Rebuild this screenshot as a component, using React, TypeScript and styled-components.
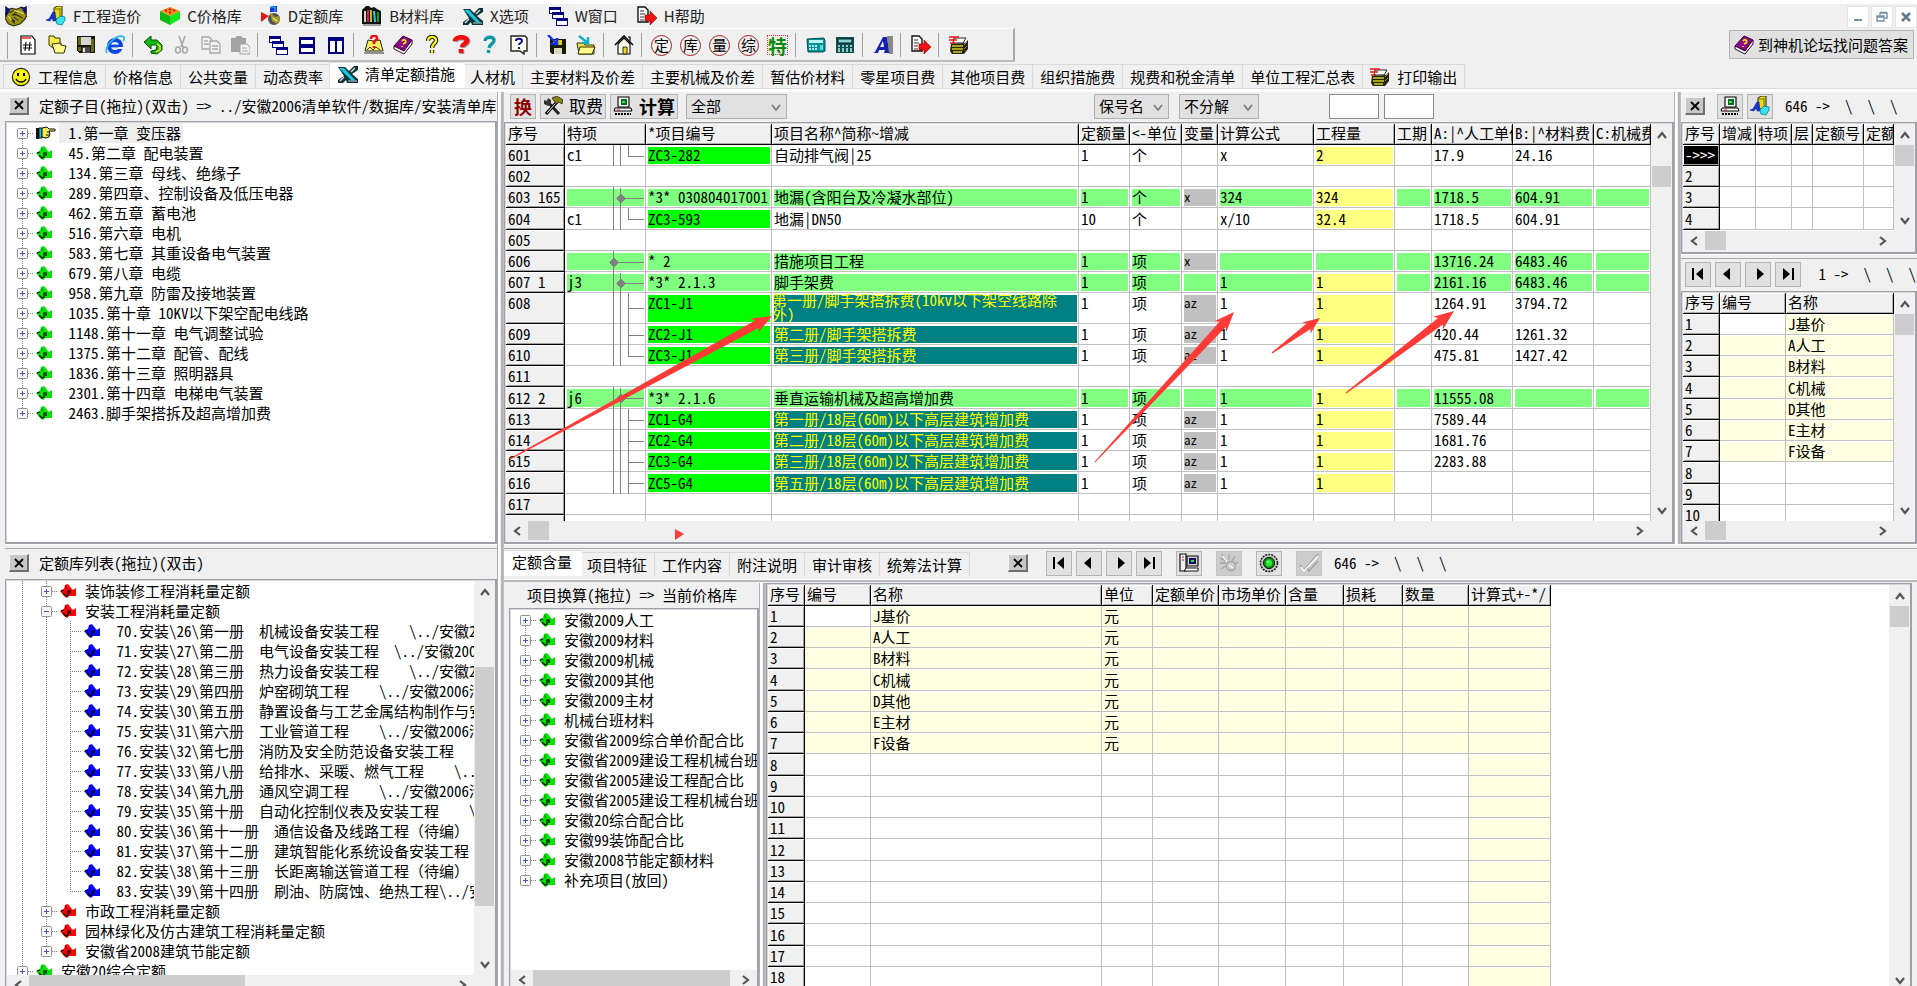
import React from 'react';
import styled, { createGlobalStyle, css } from 'styled-components';

const MONO = '"Noto Sans Mono CJK SC", "Noto Sans CJK SC", sans-serif';
const UI = '"Noto Sans CJK SC", sans-serif';

const face = '#f0f0f0';
const line = '#c0c0c0';
const edge = '#a0a0a8';

const Global = createGlobalStyle`
  *, *::before, *::after { box-sizing: border-box; }
  html, body { margin: 0; height: 100%; background: ${face}; }
  body { overflow: hidden; }
  body, button, select, input { font-family: ${MONO}; font-size: 15px; line-height: 20px; color: #000; }
  button, select, input { margin: 0; padding: 0; border: 0; border-radius: 0; background: none; }
  ul { margin: 0; padding: 0; list-style: none; }
  svg { display: block; flex: none; }
`;

/* ---------- icons ---------- */

const Pic = ({ children, size = 20 }: { children: React.ReactNode; size?: number }) => (
  <svg width={size} height={size} viewBox="0 0 20 20" aria-hidden="true">
    {children}
  </svg>
);

const I: Record<string, React.ReactNode> = {
  hands: (
    <>
      <path d="M1 5l5-2 4 1 5-2 5 2v5l-2 4-4 4-6 2-5-2-3-5z" fill="#9a9218" stroke="#2c2a04" />
      <path d="M0 1l5 3-4 7zM20 1l-5 2 4 6z" fill="#10107a" />
      <path d="M4 7l4-2 3 1-4 3 4 0 5 3M5 12l4 3M8 11l4 3M6 14l3 3" fill="none" stroke="#2c2a04" />
      <path d="M8 5l4 1 5 2M3 10l3 4" stroke="#ece460" fill="none" />
    </>
  ),
  abc: (
    <>
      <path d="M8 2l3-2h5v11l-2 2H8z" fill="#e8d820" stroke="#222" strokeWidth="1" />
      <path d="M14 2v11M8 3h6" stroke="#7a7208" />
      <path d="M0 14l3-1 4-7h2l1 9H7v-2H5l-1 2z" fill="#1436d8" stroke="#06187c" strokeWidth=".6" />
      <path d="M10 14l4-4 5 1v3l-3 5-5-1z" fill="#38e4ee" stroke="#0a7a88" strokeWidth=".8" />
    </>
  ),
  brick: (
    <>
      <path d="M10 1l10 4-10 5L0 5z" fill="#ff8a1c" />
      <path d="M0 5l10 5v9L0 14z" fill="#0cb814" />
      <path d="M20 5l-10 5v9l10-6z" fill="#12e81a" />
      <path d="M5 4l2 1M9 3l2 1M9 6l2 1M13 4l2 1" stroke="#c01010" strokeWidth="1.5" />
    </>
  ),
  shapes: (
    <>
      <path d="M0 6l8 4-8 6z" fill="#e01818" />
      <path d="M9 1l2-1h5v6h-7z" fill="#1a36e0" />
      <path d="M9 1h5v5" fill="none" stroke="#2ad0f0" />
      <circle cx="13" cy="13" r="6" fill="#50505a" />
      <path d="M9 6l5 5 4-1 1 5-3 3-5-3z" fill="#a89c20" />
      <path d="M12 12l4 3" stroke="#fff" />
    </>
  ),
  books: (
    <>
      <path d="M0 4l4-4h3l2 2 3-1 3 2 4 2v13H0z" fill="#111" />
      <path d="M3 5v11" stroke="#fff" strokeWidth="1.6" />
      <path d="M6 4v12" stroke="#e02020" strokeWidth="2" />
      <path d="M9 4v12" stroke="#f0e020" strokeWidth="1.6" />
      <path d="M12 5l1 11" stroke="#24d0e4" strokeWidth="2" />
      <path d="M16 6v10" stroke="#1ca838" strokeWidth="1.8" />
      <path d="M1 19h18" stroke="#555" />
    </>
  ),
  xtools: (
    <>
      <path d="M0 3h7l4 4 5-5h4v4l-6 4 6 5v4H9l-1-3-3 3H0v-3l6-4z" fill="#123038" />
      <path d="M1 4h5l12 13h-4z" fill="#18c8dc" />
      <path d="M17 4l-4 4M6 13l-4 4" stroke="#c8e4e4" strokeWidth="1.4" />
      <path d="M10 17h9" stroke="#7c9ca4" strokeWidth="1.6" />
    </>
  ),
  wins: (
    <g shapeRendering="crispEdges">
      <path d="M1 1h11v6H1zM4 6h11v6H4zM8 12h11v7H8z" fill="#fff" stroke="#000080" />
      <path d="M1 1h11v3H1zM4 6h11v3H4zM8 12h11v3H8z" fill="#000080" />
    </g>
  ),
  exit: (
    <>
      <path d="M1 1h7l3 3v12H1z" fill="#fff" stroke="#111" strokeWidth="1.4" />
      <path d="M3 5h4M3 8h5M3 11h4M3 14h4" stroke="#333" />
      <path d="M8 9h5V5l7 7-7 7v-4H8z" fill="#f01010" stroke="#800" strokeWidth=".6" />
    </>
  ),
  newdoc: (
    <>
      <path d="M3 1h11l3 4v14H3z" fill="#fff" stroke="#000" strokeWidth="1.2" />
      <path d="M4 3h9" stroke="#f01010" strokeWidth="1.4" />
      <path d="M8 7L7 16M12 7l-1 9M5 10h9M5 13h9" stroke="#000" strokeWidth="1.1" />
    </>
  ),
  open: (
    <>
      <path d="M2 1h5l1 2h5v5l3 4-10 1-4-3z" fill="#f4ec48" stroke="#333008" />
      <path d="M5 9l9-1v2l5 1-2 7H8z" fill="#fff88a" stroke="#333008" />
    </>
  ),
  save: (
    <g shapeRendering="crispEdges">
      <path d="M1 1h18v17H3l-2-2z" fill="#151500" />
      <path d="M2 2h3v8H2zM15 4h3v8h-3z" fill="#6c6a10" />
      <path d="M5 2h10v8H5z" fill="#d4d4d4" />
      <path d="M6 12h8v6H6z" fill="#4a4a4a" />
      <path d="M7 13h2v4H7z" fill="#e8e8e8" />
      <path d="M2 12h3v4H2zM15 12h3v5h-3z" fill="#6c6a10" />
    </g>
  ),
  ie: (
    <>
      <circle cx="10" cy="11" r="6" fill="none" stroke="#0a48e0" strokeWidth="4" />
      <path d="M5 11h12" stroke="#0a48e0" strokeWidth="2.8" />
      <path d="M13 13h6" stroke={face} strokeWidth="2" />
      <path d="M2 18C-2 12 12-2 19 2c1 1 0 3-1 4" fill="none" stroke="#28b8f0" strokeWidth="1.7" />
    </>
  ),
  undo: (
    <>
      <path d="M1 7l7-6v4h6l5 5v5l-5 4-6-1v-2l5-1 1-4-1-1H8v4z" fill="#10b818" stroke="#064a06" />
      <path d="M14 9l3 2v4l-4 2" fill="none" stroke="#e0e020" strokeWidth="1.6" />
    </>
  ),
  cut: (
    <g fill="none" stroke="#a8a8a8" strokeWidth="1.6">
      <path d="M7 1l4 11M13 1L9 12" />
      <ellipse cx="6" cy="15" rx="2.4" ry="3" />
      <ellipse cx="13" cy="15" rx="2.4" ry="3" />
    </g>
  ),
  copy: (
    <g fill="#f2f2f2" stroke="#a8a8a8" strokeWidth="1.3">
      <path d="M1 2h7l3 3v9H1z" />
      <path d="M9 6h7l3 3v9H9z" />
      <path d="M3 6h4M3 9h5M11 11h6M11 14h6" />
    </g>
  ),
  paste: (
    <>
      <path d="M1 3h4l2-2h4l2 2h3v14H1z" fill="#a4a4a4" />
      <path d="M10 9h7l3 3v7H10z" fill="#f2f2f2" stroke="#a0a0a0" />
      <path d="M12 13h5M12 16h6" stroke="#a0a0a0" />
    </>
  ),
  horiz: (
    <g shapeRendering="crispEdges">
      <path d="M3 3h14v15H3z" fill="#fff" stroke="#000080" strokeWidth="2" />
      <path d="M2 2h16v3H2zM2 9h16v4H2z" fill="#000080" />
    </g>
  ),
  vert: (
    <g shapeRendering="crispEdges">
      <path d="M3 3h14v15H3z" fill="#fff" stroke="#000080" strokeWidth="2" />
      <path d="M2 2h16v4H2zM9 2h2v16H9z" fill="#000080" />
    </g>
  ),
  helpbook: (
    <>
      <path d="M4 5l5 1 7-1 3 11H1z" fill="#f6f060" stroke="#222" />
      <path d="M0 18h20M3 15l3-3 3 3 3-3 4 3" stroke="#333" fill="none" />
      <path d="M7 4c0-5 7-4 6 0l-3 3v2M10 11v2" stroke="#f01010" strokeWidth="2.6" fill="none" />
    </>
  ),
  book: (
    <>
      <path d="M1 11L10 1l9 4-8 11z" fill="#8a0a8a" stroke="#300030" />
      <path d="M1 11l10 5 8-11v4l-8 10-10-5z" fill="#fff" stroke="#300030" />
      <path d="M9 6c2-3 5 0 3 2l-2 1M9 11v1" stroke="#f8e010" strokeWidth="1.8" fill="none" />
    </>
  ),
  qYellow: (
    <>
      <path d="M6 6c0-6 9-5 8 0-1 3-4 3-4 7M10 15v3" stroke="#111" strokeWidth="4.4" fill="none" />
      <path d="M6 6c0-6 9-5 8 0-1 3-4 3-4 7M10 15v3" stroke="#f6ee10" strokeWidth="2.4" fill="none" />
    </>
  ),
  qRed: (
    <>
      <path d="M4 6c0-5 13-5 12 0-1 3-5 3-5 6M10 14v4" stroke="#999" strokeWidth="4.6" fill="none" transform="translate(1 1)" />
      <path d="M4 6c0-5 13-5 12 0-1 3-5 3-5 6M10 14v4" stroke="#f80c0c" strokeWidth="4.6" fill="none" />
    </>
  ),
  qTeal: (
    <path d="M5 6c0-5 10-5 9 0-1 3-4 3-5 7M9 15l-1 3" stroke="#0c98a4" strokeWidth="3.4" fill="none" />
  ),
  qNote: (
    <>
      <path d="M2 1h14l2 2v13h-3v3l-4-3H2z" fill="#fffff0" stroke="#222" strokeWidth="1.4" />
      <path d="M7 6c0-3 6-3 6 0 0 2-3 2-3 4M10 12v2" stroke="#101090" strokeWidth="2" fill="none" />
    </>
  ),
  saveIn: (
    <>
      <path d="M3 4h16v15H5l-2-2z" fill="#1a1a00" />
      <path d="M6 5h9v5H6z" fill="#d8d010" />
      <path d="M7 13h8v6H7z" fill="#d8d8c0" />
      <path d="M1 0l9 9M10 3v6H4" stroke="#1030f0" strokeWidth="2.4" fill="none" />
    </>
  ),
  openIn: (
    <>
      <path d="M1 8h6l2 2h9v9H3z" fill="#f0e848" stroke="#333008" />
      <path d="M4 12h15l-3 7H2z" fill="#fff88a" stroke="#333008" />
      <path d="M3 1l9 7M12 2v6H6" stroke="#10b0c8" strokeWidth="2.4" fill="none" />
    </>
  ),
  home: (
    <>
      <path d="M1 10l9-9 9 9" fill="none" stroke="#000" strokeWidth="1.6" />
      <path d="M4 9l6-6 6 6v10H4z" fill="#fdfdf0" stroke="#000" strokeWidth="1.1" />
      <path d="M9 12h4v7H9z" fill="#f0d820" stroke="#000" strokeWidth=".8" />
      <path d="M14 2h2v4" stroke="#000" fill="none" strokeWidth="1.2" />
    </>
  ),
  phone: (
    <>
      <path d="M1 4l17-1 1 3v10l-2 1H2z" fill="#0c9098" stroke="#064c54" />
      <path d="M3 5h14v3H3z" fill="#b8f4f4" />
      <path d="M3 11h9M3 14h9" stroke="#e8ffff" strokeDasharray="2 1" strokeWidth="1.6" />
      <path d="M14 10h3v5h-3z" fill="#48e0e0" />
    </>
  ),
  calc: (
    <>
      <path d="M1 2h18v16H1z" fill="#0a5054" />
      <path d="M3 4h14v4H3z" fill="#8cd4d0" stroke="#022" />
      <path d="M3 11h14M3 14h14M3 16h14" stroke="#c8f0ec" strokeDasharray="2 2" strokeWidth="1.4" />
    </>
  ),
  bigA: (
    <>
      <path d="M14 1h6v18h-4z" fill="#8a8a8a" />
      <path d="M0 18l2-1 8-15h4l2 15 1 1h-6l1-3H6l-1 3zM7 12h4l-1-6z" fill="#1020b0" fillRule="evenodd" />
    </>
  ),
  printer: (
    <>
      <path d="M5 3h12l-3 5H4z" fill="#fff" stroke="#222" />
      <path d="M0 2h10M0 5h8M1 8h5" stroke="#f01010" strokeWidth="1.6" />
      <path d="M2 9l14-1 3-3v9l-4 5H3l-2-3z" fill="#26240a" />
      <path d="M3 11h11M3 14h11M4 17h9" stroke="#d8d020" strokeWidth="1.4" />
      <path d="M15 10l3-3M15 14l3-3" stroke="#8a8a60" />
    </>
  ),
  smile: (
    <>
      <circle cx="10" cy="10" r="8.6" fill="#f8f410" stroke="#222" strokeWidth="1.2" />
      <path d="M7 6v3M13 6v3" stroke="#000" strokeWidth="2" />
      <path d="M5 12c2 4 8 4 10 0" fill="none" stroke="#000" strokeWidth="1.3" />
    </>
  ),
  hammer: (
    <>
      <path d="M4 5l12 13" stroke="#222" strokeWidth="3" />
      <path d="M1 4l3 1 1-3 3 2v4l-3 2-4-2z" fill="#333" />
      <path d="M14 6L3 18" stroke="#000" strokeWidth="3.2" />
      <path d="M13 7L4 17" stroke="#f0f0f0" />
      <path d="M9 2l5-2 6 4-1 4-3-2-3 2z" fill="#8a8410" stroke="#222" strokeWidth=".8" />
    </>
  ),
  pc: (
    <>
      <path d="M5 1h11v10H5z" fill="#f4f4f4" stroke="#000" strokeWidth="1.1" />
      <path d="M8 3h6v6H8z" fill="#0a6a20" />
      <path d="M9 5h3v2H9z" fill="#20f040" />
      <path d="M2 12h16l1 3H1z" fill="#fff" stroke="#000" />
      <path d="M4 14h3" stroke="#f01010" />
      <path d="M2 18h16" stroke="#000" strokeWidth="2" strokeDasharray="2 1" />
    </>
  ),
  pcTower: (
    <>
      <path d="M1 1h6v17H1z" fill="#eee" stroke="#111" strokeWidth="1.2" />
      <path d="M3 4h2M3 7h2" stroke="#c01040" />
      <path d="M8 3h11v10H8z" fill="#ccc" stroke="#111" strokeWidth="1.2" />
      <path d="M10 5h7v6h-7z" fill="#101060" />
      <path d="M12 7h3v2h-3z" fill="#28e050" />
      <path d="M7 15h12v3H5z" fill="#fff" stroke="#111" />
    </>
  ),
  gear: (
    <g stroke="#a4a4a4" fill="none" strokeWidth="1.3">
      <circle cx="12" cy="13" r="4.5" />
      <path d="M3 1l4 6M10 1v6M16 3l-3 5M1 5l7 4M1 10h6M2 16l5-3M16 11l3-2" />
      <path d="M10 12l4 3M4 3l4 6" stroke="#fff" />
    </g>
  ),
  lamp: (
    <>
      <circle cx="10" cy="10" r="8.5" fill="#c8c8c8" stroke="#222" strokeWidth="1.6" strokeDasharray="2 1" />
      <circle cx="10" cy="10" r="5.6" fill="#0c8a18" stroke="#111" />
      <circle cx="10" cy="10" r="3.4" fill="#1ef030" />
      <circle cx="9" cy="9" r="1" fill="#d0ffd0" />
    </>
  ),
  checks: (
    <g fill="none" strokeWidth="1.4">
      <path d="M1 12l4 5L19 1M8 15l2 3 9-10" stroke="#a0a0a0" />
      <path d="M2 14l3 4L19 3" stroke="#fff" />
    </g>
  ),
};

const Ico = ({ name, size }: { name: string; size?: number }) => <Pic size={size}>{I[name]}</Pic>;

const NavIcon = ({ kind }: { kind: string }) => (
  <svg width="16" height="16" viewBox="0 0 16 16" aria-hidden="true">
    {kind === 'first' && <path d="M2 2h2v12H2zM13 2v12L6 8z" />}
    {kind === 'prev' && <path d="M10 2v12L3 8z" />}
    {kind === 'next' && <path d="M7 2v12l7-6z" />}
    {kind === 'last' && <path d="M12 2h2v12h-2zM3 2v12l7-6z" />}
  </svg>
);

const Chevron = ({ dir, color = '#555' }: { dir: 'up' | 'down' | 'left' | 'right'; color?: string }) => {
  const d = { up: 'M1 8l4-5 4 5', down: 'M1 3l4 5 4-5', left: 'M8 1L3 5l5 4', right: 'M2 1l5 4-5 4' }[dir];
  return (
    <svg width="10" height="10" viewBox="0 0 10 10" aria-hidden="true">
      <path d={d} fill="none" stroke={color} strokeWidth={color === '#555' ? 2.2 : 1.6} />
    </svg>
  );
};

/* ---------- frame ---------- */

const Shell = styled.div`
  display: flex;
  flex-direction: column;
  height: 100vh;
  overflow: hidden;
  border-top: 4px solid #fff;
  background: ${face};
`;

const MenuBar = styled.nav`
  display: flex;
  align-items: center;
  height: 24px;
  padding-left: 5px;
  gap: 19px;
`;

const MenuButton = styled.button`
  display: flex;
  align-items: center;
  gap: 7px;
  height: 24px;
  padding-bottom: 1px;
  font-family: ${UI};
  color: #222;
  white-space: nowrap;
`;

const WindowButtons = styled.div`
  display: flex;
  align-self: flex-end;
  gap: 2px;
  margin-left: auto;
`;

const WindowButton = styled.button`
  display: grid;
  place-items: center;
  width: 22px;
  height: 22px;
  background: #fff;
  border: 1px solid #e4e4e4;
`;

const ToolRow = styled.div`
  display: flex;
  justify-content: space-between;
  align-items: flex-start;
  height: 34px;
  padding-right: 3px;
`;

const ToolBar = styled.div`
  display: flex;
  align-items: center;
  height: 34px;
  padding: 1px 40px 0 6px;
  border: solid;
  border-width: 1px 2px 2px 0;
  border-color: #fff #a8a8a8 #bcbcbc #fff;

  &::before {
    content: '';
    align-self: stretch;
    width: 2px;
    margin: 2px 5px 1px 0;
    border-right: 1px solid #a0a0a0;
  }
`;

const ToolButton = styled.button`
  display: grid;
  place-items: center;
  width: 29px;
  height: 28px;
`;

const ToolSeparator = styled.i`
  width: 9px;
  height: 24px;
  border-left: 1px solid #a0a0a0;
  margin-left: 3px;
  margin-right: -3px;
`;

const RoundGlyph = styled.span`
  display: grid;
  place-items: center;
  width: 21px;
  height: 21px;
  border: 1px solid #a02020;
  border-radius: 50%;
  line-height: 16px;
  font-size: 15px;
`;

const GreenGlyph = styled.span`
  display: grid;
  place-items: center;
  height: 20px;
  font-size: 19px;
  font-weight: 700;
  color: #0a8a0a;
  border: 1px dotted #f03030;
`;

const ForumButton = styled.button`
  display: flex;
  align-items: center;
  gap: 4px;
  height: 29px;
  margin-top: 2px;
  padding: 0 5px 0 4px;
  background: #e1e1e1;
  border: 1px solid #b4b4b4;
  white-space: nowrap;
`;

const TabStrip = styled.div<{ $inset?: number }>`
  display: flex;
  align-items: flex-end;
  padding-left: ${(p) => p.$inset ?? 0}px;
`;

const Tab = styled.button<{ $on?: boolean }>`
  display: flex;
  align-items: center;
  gap: 7px;
  height: 24px;
  padding: 0 7px;
  border: solid #dadada;
  border-width: 1px 0 0 1px;
  background: ${face};
  white-space: nowrap;

  &:last-of-type { border-right-width: 1px; }

  ${(p) =>
    p.$on &&
    css`
      height: 26px;
      margin: 0 -3px 0 -1px;
      padding: 0 10px 3px 8px;
      z-index: 1;
      background: #fff;
      border-color: #e0e0e0;
    `}
`;

const Workspace = styled.main`
  display: flex;
  flex: 1;
  min-height: 0;
  margin-bottom: -7px;
  border-top: 1px solid #dadada;
  padding-top: 3px;
  background: linear-gradient(#fff 3px, ${face} 3px);
`;

const Column = styled.div<{ $width?: number }>`
  display: flex;
  flex-direction: column;
  min-width: 0;
  min-height: 0;
  ${(p) => (p.$width ? `flex: none; width: ${p.$width}px;` : 'flex: 1;')}
`;

const LeftColumn = styled(Column)`
  padding-left: 5px;
  margin-bottom: -5px;
`;

const Row = styled.div<{ $height?: number }>`
  display: flex;
  min-height: 0;
  ${(p) => (p.$height ? `flex: none; height: ${p.$height}px;` : 'flex: 1;')}
`;

const Pane = styled.section<{ $height?: number }>`
  position: relative;
  display: flex;
  flex-direction: column;
  min-width: 0;
  min-height: 0;
  ${(p) => (p.$height ? `flex: none; height: ${p.$height}px;` : 'flex: 1;')}
`;

const VSplit = styled.div`
  flex: none;
  width: 7px;
  border-left: 1px solid #b0b0b4;
  border-right: 1px solid #c0c0c4;
  box-shadow: inset 2px 0 0 #fff, inset -2px 0 0 #b4b4b8;
`;

const HSplit = styled.div`
  flex: none;
  height: 5px;
  border-bottom: 1px solid #a8a8ac;
  border-top: 1px solid #fff;
`;

const PaneHead = styled.header<{ $height?: number; $pad?: number }>`
  display: flex;
  flex: none;
  align-items: center;
  height: ${(p) => p.$height ?? 30}px;
  padding-left: ${(p) => p.$pad ?? 4}px;
  padding-bottom: 2px;
  overflow-x: clip;
  white-space: pre;
`;

const HeadText = styled.span<{ $gap?: number }>`
  margin-left: ${(p) => p.$gap ?? 10}px;
`;

const CloseBox = styled.button`
  flex: none;
  width: 20px;
  height: 18px;
  display: grid;
  place-items: center;
  background: #c8c8c8;
  border: solid;
  border-width: 1px 2px 2px 1px;
  border-color: #f4f4f4 #707070 #707070 #f4f4f4;
`;

const Close = ({ label }: { label: string }) => (
  <CloseBox aria-label={label}>
    <svg width="10" height="10" viewBox="0 0 10 10" aria-hidden="true">
      <path d="M1 1l8 8M9 1L1 9" stroke="#000" strokeWidth="1.8" />
    </svg>
  </CloseBox>
);

const FlatButton = styled.button<{ $gap?: number; $off?: boolean }>`
  display: flex;
  flex: none;
  align-items: center;
  justify-content: center;
  gap: 6px;
  min-width: 26px;
  height: 25px;
  padding: 0 2px;
  margin-left: ${(p) => p.$gap ?? 4}px;
  background: ${(p) => (p.$off ? '#cccccc' : '#e1e1e1')};
  border: 1px solid ${(p) => (p.$off ? '#c4c4c4' : '#b4b4b4')};
`;

const Swap = styled.b`
  color: #8c0000;
  font-size: 18px;
`;

const Big = styled.span<{ $bold?: boolean }>`
  font-size: ${(p) => (p.$bold ? 18 : 17)}px;
  font-weight: ${(p) => (p.$bold ? 700 : 400)};
`;

const PickWrap = styled.label<{ $width: number; $gap: number }>`
  position: relative;
  flex: none;
  width: ${(p) => p.$width}px;
  margin-left: ${(p) => p.$gap}px;

  svg {
    position: absolute;
    right: 6px;
    top: 8px;
    pointer-events: none;
  }
`;

const Pick = styled.select`
  display: block;
  width: 100%;
  height: 25px;
  padding: 0 0 1px 4px;
  appearance: none;
  background: #e1e1e1;
  border: 1px solid #b0b0b0;
`;

const Select = ({ label, value, width, gap }: { label: string; value: string; width: number; gap: number }) => (
  <PickWrap $width={width} $gap={gap}>
    <Pick aria-label={label} defaultValue={value}>
      <option>{value}</option>
    </Pick>
    <Chevron dir="down" color="#777" />
  </PickWrap>
);

const Field = styled.input`
  flex: none;
  width: 50px;
  height: 25px;
  margin-right: 5px;
  background: #fff;
  border: 1px solid #8a8a8a;
`;

const Spring = styled.div<{ $end?: number }>`
  flex: 1;
  ${(p) => p.$end && `flex: none; width: ${p.$end}px;`}
`;

/* ---------- boxes and scroll bars ---------- */

const Box = styled.div<{ $white?: boolean }>`
  display: flex;
  flex: 1;
  flex-direction: column;
  min-height: 0;
  border: solid ${edge};
  border-width: 1px 2px 2px 1px;
  box-shadow: inset 1px 1px 0 #d8d8dc;
  padding: 1px 0 0 1px;
  background: ${(p) => (p.$white ? '#fff' : face)};
`;

const BoxBody = styled.div`
  display: flex;
  flex: 1;
  min-height: 0;
`;

const Clip = styled.div<{ $pad?: number; $top?: number }>`
  flex: 1;
  min-width: 0;
  overflow: hidden;
  background: #fff;
  padding: ${(p) => p.$top ?? 0}px 0 0 ${(p) => p.$pad ?? 0}px;
`;

const VBar = styled.div`
  display: flex;
  flex: none;
  flex-direction: column;
  align-items: center;
  justify-content: space-between;
  width: 21px;
  padding: 6px 0;
  background: ${face};
`;

const HBar = styled.div<{ $end?: number }>`
  display: flex;
  flex: none;
  align-items: center;
  justify-content: space-between;
  height: 21px;
  padding: 0 6px 2px 6px;
  margin-right: ${(p) => p.$end ?? 0}px;
`;

const VThumb = styled.div<{ $before: number; $size: number }>`
  width: 19px;
  height: ${(p) => p.$size}px;
  margin-top: ${(p) => p.$before}px;
  margin-bottom: auto;
  background: #cdcdcd;
`;

const HThumb = styled.div<{ $size: number }>`
  width: ${(p) => p.$size}px;
  height: 19px;
  margin-left: 6px;
  margin-right: auto;
  background: #cdcdcd;
`;

const VScroll = ({ before, size }: { before: number; size: number }) => (
  <VBar>
    <Chevron dir="up" />
    <VThumb $before={before} $size={size} />
    <Chevron dir="down" />
  </VBar>
);

const HScroll = ({ size, end }: { size: number; end?: number }) => (
  <HBar $end={end}>
    <Chevron dir="left" />
    <HThumb $size={size} />
    <Chevron dir="right" />
  </HBar>
);

/* ---------- trees ---------- */

const TreeRow = styled.li`
  display: flex;
  align-items: center;
  height: 20px;
  white-space: pre;
`;

const TreeIcon = styled.span`
  flex: none;
  width: 24px;
  padding-left: 2px;
`;

const TreeText = styled.span<{ $on?: boolean }>`
  margin-left: 1px;
  padding: 0 2px 1px 2px;
  line-height: 19px;
  background: ${(p) => (p.$on ? '#eeeeee' : 'transparent')};
`;

type GuideKind = 'line' | 'plus' | 'minus' | 'tee' | 'end' | 'first' | 'last';

const Guide = ({ kind }: { kind: GuideKind }) => {
  const boxed = kind === 'plus' || kind === 'minus' || kind === 'first' || kind === 'last';
  const top = kind === 'first' ? 10 : 0;
  const bottom = kind === 'last' || kind === 'end' ? 10 : 20;
  return (
    <svg width="24" height="20" viewBox="0 0 24 20" aria-hidden="true">
      <g stroke="#808080" strokeDasharray="1 1">
        <path d={`M12.5 ${top}V${bottom}`} />
        {kind !== 'line' && <path d="M12 10.5H24" />}
      </g>
      {boxed && (
        <>
          <rect x="7.5" y="5.5" width="10" height="10" rx="1" fill="#f6f6f6" stroke="#949494" />
          <path d={kind === 'minus' ? 'M10 10.5h5' : 'M10 10.5h5M12.5 8v5'} stroke="#3c5cb0" />
        </>
      )}
    </svg>
  );
};

const Leaf = ({ color }: { color: string }) => (
  <svg width="18" height="16" viewBox="0 0 18 16" aria-hidden="true">
    <path d="M2 10l5-6 3-2 2 5 4-1v7l-7 0-2 2z" fill="#b0b0b0" />
    <path d="M0 8l4-2 1-4 3-1 2 3 3 3 3-2v8H9l-2 2-3-2z" fill={color} />
    <path d="M1 8l3-1M3 10l3 3 2-1V8h2v3" fill="none" stroke="#000" strokeOpacity=".8" strokeWidth="1.5" />
    <path d="M6 3v3" stroke="#000" strokeOpacity=".4" />
  </svg>
);

const Finger = () => (
  <svg width="20" height="14" viewBox="0 0 20 14" aria-hidden="true">
    <path d="M0 2h3v11H0z" fill="#111" />
    <path d="M3 2h3v10H3z" fill="#18c8dc" stroke="#111" />
    <path d="M6 2l5-1 2 2h6v2h-6l1 3-1 3-3 1-4-1z" fill="#f4ec50" stroke="#111" />
    <path d="M11 6h3M10 9h3" stroke="#111" />
  </svg>
);

type Node = { text: string; guides: GuideKind[]; color: string; on?: boolean };

const GREEN = '#06e406';
const RED = '#f80808';
const BLUE = '#0808f8';

const Tree = ({ nodes }: { nodes: Node[] }) => (
  <ul>
    {nodes.map((n) => (
      <TreeRow key={n.text}>
        {n.guides.map((g, i) => (
          <Guide key={i} kind={g} />
        ))}
        <TreeIcon>{n.on ? <Finger /> : <Leaf color={n.color} />}</TreeIcon>
        <TreeText $on={n.on}>{n.text}</TreeText>
      </TreeRow>
    ))}
  </ul>
);

const roots = (texts: string[], activeFirst = false): Node[] =>
  texts.map((text, i) => ({
    text,
    color: GREEN,
    on: activeFirst && i === 0,
    guides: [i === 0 ? 'first' : i === texts.length - 1 ? 'last' : 'plus'],
  }));

const chapters = roots(
  [
    ' 1.第一章 变压器',
    ' 45.第二章 配电装置',
    ' 134.第三章 母线、绝缘子',
    ' 289.第四章、控制设备及低压电器',
    ' 462.第五章 蓄电池',
    ' 516.第六章 电机',
    ' 583.第七章 其重设备电气装置',
    ' 679.第八章 电缆',
    ' 958.第九章 防雷及接地装置',
    ' 1035.第十章 10KV以下架空配电线路',
    ' 1148.第十一章 电气调整试验',
    ' 1375.第十二章 配管、配线',
    ' 1836.第十三章 照明器具',
    ' 2301.第十四章 电梯电气装置',
    ' 2463.脚手架搭拆及超高增加费',
  ],
  true,
);

const volumes = [
  ' 70.安装\\26\\第一册  机械设备安装工程    \\../安徽2',
  ' 71.安装\\27\\第二册  电气设备安装工程  \\../安徽200',
  ' 72.安装\\28\\第三册  热力设备安装工程    \\../安徽2',
  ' 73.安装\\29\\第四册  炉窑砌筑工程    \\../安徽2006清',
  ' 74.安装\\30\\第五册  静置设备与工艺金属结构制作与安',
  ' 75.安装\\31\\第六册  工业管道工程    \\../安徽2006清',
  ' 76.安装\\32\\第七册  消防及安全防范设备安装工程',
  ' 77.安装\\33\\第八册  给排水、采暖、燃气工程    \\..',
  ' 78.安装\\34\\第九册  通风空调工程    \\../安徽2006清',
  ' 79.安装\\35\\第十册  自动化控制仪表及安装工程    \\',
  ' 80.安装\\36\\第十一册  通信设备及线路工程（待编）',
  ' 81.安装\\37\\第十二册  建筑智能化系统设备安装工程',
  ' 82.安装\\38\\第十三册  长距离输送管道工程（待编）',
  ' 83.安装\\39\\第十四册  刷油、防腐蚀、绝热工程\\../安',
];

const libraries: Node[] = [
  { text: '装饰装修工程消耗量定额', color: RED, guides: ['line', 'plus'] },
  { text: '安装工程消耗量定额', color: RED, guides: ['line', 'minus'] },
  ...volumes.map(
    (text, i): Node => ({
      text,
      color: BLUE,
      guides: ['line', 'line', i === volumes.length - 1 ? 'end' : 'tee'],
    }),
  ),
  { text: '市政工程消耗量定额', color: RED, guides: ['line', 'plus'] },
  { text: '园林绿化及仿古建筑工程消耗量定额', color: RED, guides: ['line', 'plus'] },
  { text: '安徽省2008建筑节能定额', color: RED, guides: ['line', 'last'] },
  { text: '安徽20综合定额', color: GREEN, guides: ['plus'] },
];

const prices = roots([
  '安徽2009人工',
  '安徽2009材料',
  '安徽2009机械',
  '安徽2009其他',
  '安徽2009主材',
  '机械台班材料',
  '安徽省2009综合单价配合比',
  '安徽省2009建设工程机械台班',
  '安徽省2005建设工程配合比',
  '安徽省2005建设工程机械台班',
  '安徽20综合配合比',
  '安徽99装饰配合比',
  '安徽2008节能定额材料',
  '补充项目(放回)',
]);

/* ---------- grids ---------- */

const Grid = styled.table<{ $width?: number }>`
  width: ${(p) => (p.$width ? `${p.$width}px` : '100%')};
  table-layout: fixed;
  border-collapse: separate;
  border-spacing: 0;

  th,
  td {
    padding: 0 2px;
    overflow-x: clip;
    text-align: left;
    white-space: pre;
    font-weight: 400;
    line-height: 18px;
  }
`;

const HeadCell = styled.th`
  && { padding-bottom: 2px; }
  height: 21px;
  background: ${face};
  border-right: 1px solid #000;
  border-bottom: 1px solid #000;
  box-shadow: inset 1px 1px 0 #fff, inset -1px -1px 0 #b0b0b0;
`;

const GridRow = styled.tr<{ $tall?: boolean }>`
  height: 21px;

  &:nth-child(4n) { height: 22px; }

  ${(p) =>
    p.$tall &&
    css`
      &&& { height: 31px; }

      th, td { vertical-align: top; padding-top: 1px; }
    `}
`;

const NumCell = styled.th<{ $on?: boolean }>`
  border-right: 1px solid #000;
  border-bottom: 1px solid #000;
  background: ${(p) => (p.$on ? '#000' : face)};
  color: ${(p) => (p.$on ? '#fff' : '#000')};
  box-shadow: inset 1px 1px 0 #fff, inset -1px -1px 0 #a0a0a0;
`;

type Fill = 'group' | 'code' | 'teal' | 'qty' | 'var' | 'cream' | undefined;

const fills: Record<string, string> = {
  group: '#80ff80',
  code: '#00ff00',
  teal: '#008080',
  qty: '#ffff80',
  var: '#c0c0c0',
  cream: '#ffffe1',
};

const Cell = styled.td<{ $fill?: Fill; $wrap?: boolean }>`
  position: relative;
  border-right: 1px solid ${line};
  border-bottom: 1px solid ${line};
  background: ${(p) => (p.$fill ? fills[p.$fill] : '#fff')};
  color: ${(p) => (p.$fill === 'teal' ? '#ffff00' : '#000')};
  font-size: ${(p) => (p.$fill === 'var' ? 13 : 15)}px;
  box-shadow: ${(p) =>
    p.$fill && p.$fill !== 'cream' ? 'inset 0 0 0 1px #fff, inset 1px 1px 0 1px #fff' : 'inset 0 1px 0 #fff'};

  ${(p) =>
    p.$wrap &&
    css`
      && { white-space: normal; line-height: 14px; padding: 0; }
    `}
`;

const Branch = styled.svg`
  position: absolute;
  left: 44px;
  top: 0;
`;

/* Connector drawing for the outline column: mark says where the row hangs. */
type Mark = 'root' | 'node' | 'tee' | 'end';

const Branches = ({ mark, height }: { mark: Mark; height: number }) => {
  const mid = Math.floor(height / 2);
  const x = mark === 'root' ? 5 : mark === 'node' ? 12 : 19;
  return (
    <Branch width="36" height={height} viewBox={`0 0 36 ${height}`} aria-hidden="true">
      <g stroke="#808080" fill="none">
        <path d={`M4.5 0V${height}`} />
        {mark !== 'root' && <path d={`M11.5 ${mark === 'node' ? 1 : 0}V${height}`} />}
        {mark === 'tee' && <path d={`M19.5 0V${height}`} />}
        {mark === 'end' && <path d={`M19.5 0V${mid}`} />}
        <path d={`M${x} ${mid}.5H35`} />
      </g>
      {(mark === 'root' || mark === 'node') && (
        <path d={`M${x} ${mid - 4}l4 4v1l-4 4-4-4v-1z`} fill="#808080" stroke="#808080" strokeLinejoin="round" />
      )}
    </Branch>
  );
};

const Cols = ({ widths }: { widths: (number | undefined)[] }) => (
  <colgroup>
    {widths.map((w, i) => (
      <col key={i} width={w} />
    ))}
  </colgroup>
);

const Head = ({ titles }: { titles: string[] }) => (
  <thead>
    <tr>
      {titles.map((t) => (
        <HeadCell key={t} scope="col">
          {t}
        </HeadCell>
      ))}
    </tr>
  </thead>
);

type Item = {
  no: string;
  tag?: string;
  mark?: Mark;
  group?: boolean;
  teal?: boolean;
  /* code, name, count, unit, variable, formula, quantity, labour, material */
  v?: string[];
};

const items: Item[] = [
  { no: '601', tag: 'c1', mark: 'end', v: ['ZC3-282', '自动排气阀|25', '1', '个', '', 'x', '2', '17.9', '24.16'] },
  { no: '602' },
  { no: '603 165', mark: 'node', group: true, v: ['*3* 030804017001', '地漏(含阳台及冷凝水部位)', '1', '个', 'x', '324', '324', '1718.5', '604.91'] },
  { no: '604', tag: 'c1', mark: 'end', v: ['ZC3-593', '地漏|DN50', '10', '个', '', 'x/10', '32.4', '1718.5', '604.91'] },
  { no: '605' },
  { no: '606', mark: 'root', group: true, v: ['* 2', '措施项目工程', '1', '项', 'x', '', '', '13716.24', '6483.46'] },
  { no: '607 1', tag: 'j3', mark: 'node', group: true, v: ['*3* 2.1.3', '脚手架费', '1', '项', '', '1', '1', '2161.16', '6483.46'] },
  { no: '608', mark: 'tee', teal: true, v: ['ZC1-J1', '第一册/脚手架搭拆费(10kv以下架空线路除外)', '1', '项', 'az', '1', '1', '1264.91', '3794.72'] },
  { no: '609', mark: 'tee', teal: true, v: ['ZC2-J1', '第二册/脚手架搭拆费', '1', '项', 'az', '1', '1', '420.44', '1261.32'] },
  { no: '610', mark: 'end', teal: true, v: ['ZC3-J1', '第三册/脚手架搭拆费', '1', '项', 'az', '1', '1', '475.81', '1427.42'] },
  { no: '611' },
  { no: '612 2', tag: 'j6', mark: 'node', group: true, v: ['*3* 2.1.6', '垂直运输机械及超高增加费', '1', '项', '', '1', '1', '11555.08', ''] },
  { no: '613', mark: 'tee', teal: true, v: ['ZC1-G4', '第一册/18层(60m)以下高层建筑增加费', '1', '项', 'az', '1', '1', '7589.44', ''] },
  { no: '614', mark: 'tee', teal: true, v: ['ZC2-G4', '第二册/18层(60m)以下高层建筑增加费', '1', '项', 'az', '1', '1', '1681.76', ''] },
  { no: '615', mark: 'tee', teal: true, v: ['ZC3-G4', '第三册/18层(60m)以下高层建筑增加费', '1', '项', 'az', '1', '1', '2283.88', ''] },
  { no: '616', mark: 'tee', teal: true, v: ['ZC5-G4', '第五册/18层(60m)以下高层建筑增加费', '1', '项', 'az', '1', '1', '', ''] },
  { no: '617' },
  { no: '' },
];

const ItemGrid = () => (
  <Grid>
    <Cols widths={[59, 81, 126, undefined, 51, 52, 36, 96, 81, 37, 81, 81, 57]} />
    <Head
      titles={['序号', '特项', '*项目编号', '项目名称^简称~增减', '定额量', '<-单位', '变量', '计算公式', '工程量', '工期', 'A:|^人工单价', 'B:|^材料费', 'C:机械费']}
    />
    <tbody>
      {items.map((it) => {
        const tall = it.no === '608';
        const base: Fill = it.group ? 'group' : undefined;
        const [code, name, count, unit, variable, formula, qty, labour, material] = it.v ?? [];
        return (
          <GridRow key={it.no} $tall={tall}>
            <NumCell scope="row">{it.no}</NumCell>
            <Cell $fill={base}>
              {it.tag}
              {it.mark && <Branches mark={it.mark} height={tall ? 31 : 22} />}
            </Cell>
            <Cell $fill={base ?? (code ? 'code' : undefined)}>{code}</Cell>
            <Cell $fill={it.teal ? 'teal' : base} $wrap={tall}>
              {name}
            </Cell>
            <Cell $fill={base}>{count}</Cell>
            <Cell $fill={base}>{unit}</Cell>
            <Cell $fill={variable ? 'var' : base}>{variable}</Cell>
            <Cell $fill={base}>{formula}</Cell>
            <Cell $fill={qty ? 'qty' : base}>{qty}</Cell>
            <Cell $fill={base} />
            <Cell $fill={base}>{labour}</Cell>
            <Cell $fill={base}>{material}</Cell>
            <Cell $fill={base} />
          </GridRow>
        );
      })}
    </tbody>
  </Grid>
);

const kinds = ['J基价', 'A人工', 'B材料', 'C机械', 'D其他', 'E主材', 'F设备'];

const AdjustGrid = () => (
  <Grid>
    <Cols widths={[37, 36, 36, 21, 51, undefined]} />
    <Head titles={['序号', '增减', '特项', '层', '定额号', '定额']} />
    <tbody>
      {['->>>', '2', '3', '4'].map((n, i) => (
        <GridRow key={n}>
          <NumCell scope="row" $on={i === 0}>
            {n}
          </NumCell>
          <Cell />
          <Cell />
          <Cell />
          <Cell />
          <Cell />
        </GridRow>
      ))}
    </tbody>
  </Grid>
);

const KindGrid = () => (
  <Grid>
    <Cols widths={[37, 66, undefined]} />
    <Head titles={['序号', '编号', '名称']} />
    <tbody>
      {Array.from({ length: 10 }, (_, i) => (
        <GridRow key={i}>
          <NumCell scope="row">{i + 1}</NumCell>
          <Cell $fill={i > 0 && i < 7 ? 'cream' : undefined} />
          <Cell $fill={i < 7 ? 'cream' : undefined}>{kinds[i]}</Cell>
        </GridRow>
      ))}
    </tbody>
  </Grid>
);

const ContentGrid = () => (
  <Grid $width={783}>
    <Cols widths={[37, 66, 231, 51, 66, 67, 58, 59, 66, 82]} />
    <Head titles={['序号', '编号', '名称', '单位', '定额单价', '市场单价', '含量', '损耗', '数量', '计算式+-*/']} />
    <tbody>
      {Array.from({ length: 18 }, (_, i) => {
        const cream: Fill = i < 7 ? 'cream' : undefined;
        return (
          <GridRow key={i}>
            <NumCell scope="row">{i + 1}</NumCell>
            <Cell $fill={i > 0 ? cream : undefined} />
            <Cell $fill={cream}>{kinds[i]}</Cell>
            <Cell $fill={cream}>{i < 7 ? '元' : ''}</Cell>
            <Cell $fill={cream} />
            <Cell $fill={cream} />
            <Cell $fill={cream} />
            <Cell $fill={cream} />
            <Cell $fill={cream} />
            <Cell $fill="cream" />
          </GridRow>
        );
      })}
    </tbody>
  </Grid>
);

/* ---------- red pointer marks drawn over the item grid ---------- */

const MarkLayer = styled.svg`
  position: absolute;
  left: 0;
  top: 0;
  width: 100%;
  height: 100%;
  pointer-events: none;
`;

const pointer = (x1: number, y1: number, x2: number, y2: number, head: number, half: number) => {
  const len = Math.hypot(x2 - x1, y2 - y1);
  const ux = (x2 - x1) / len;
  const uy = (y2 - y1) / len;
  const at = (along: number, side: number) =>
    `${Math.round((x1 + ux * along - uy * side) * 10) / 10},${Math.round((y1 + uy * along + ux * side) * 10) / 10}`;
  return [
    at(0, 0.5),
    at(len - head + 3, half * 0.5),
    at(len - head, half),
    at(len, 0),
    at(len - head, -half),
    at(len - head + 3, -half * 0.5),
    at(0, -0.5),
  ].join(' ');
};

const Marks = () => (
  <MarkLayer aria-hidden="true">
    <g fill="#ff3b38">
      <polygon points={pointer(6, 367, 268, 224, 20, 8)} />
      <polygon points={pointer(591, 370, 730, 220, 20, 8)} />
      <polygon points={pointer(768, 261, 816, 226, 17, 7)} />
      <polygon points={pointer(842, 301, 950, 219, 20, 8)} />
      <polygon points="171,437 180,442 171,448" />
    </g>
  </MarkLayer>
);

/* ---------- page ---------- */

const menus: [string, string][] = [
  ['abc', 'F工程造价'],
  ['brick', 'C价格库'],
  ['shapes', 'D定额库'],
  ['books', 'B材料库'],
  ['xtools', 'X选项'],
  ['wins', 'W窗口'],
  ['exit', 'H帮助'],
];

const tools: string[][] = [
  ['newdoc', 'open', 'save', 'ie'],
  ['undo', 'cut', 'copy', 'paste'],
  ['wins', 'horiz', 'vert'],
  ['helpbook', 'book', 'qYellow', 'qRed', 'qTeal', 'qNote'],
  ['saveIn', 'openIn'],
  ['home'],
  ['定', '库', '量', '综', '特'],
  ['phone', 'calc'],
  ['bigA'],
  ['exit'],
  ['printer'],
];

const tabs: [string, string?][] = [
  ['工程信息', 'smile'],
  ['价格信息'],
  ['公共变量'],
  ['动态费率'],
  ['清单定额措施', 'xtools'],
  ['人材机'],
  ['主要材料及价差'],
  ['主要机械及价差'],
  ['暂估价材料'],
  ['零星项目费'],
  ['其他项目费'],
  ['组织措施费'],
  ['规费和税金清单'],
  ['单位工程汇总表'],
  ['打印输出', 'printer'],
];

const detailTabs = ['定额含量', '项目特征', '工作内容', '附注说明', '审计审核', '统筹法计算'];

const navs: [string, string][] = [
  ['first', '首条'],
  ['prev', '上一条'],
  ['next', '下一条'],
  ['last', '末条'],
];

const NavButtons = () => (
  <>
    {navs.map(([kind, label]) => (
      <FlatButton key={kind} aria-label={label}>
        <NavIcon kind={kind} />
      </FlatButton>
    ))}
  </>
);

const toolFace = (name: string) => {
  if (I[name]) return <Ico name={name} />;
  return name === '特' ? <GreenGlyph>{name}</GreenGlyph> : <RoundGlyph>{name}</RoundGlyph>;
};

const DetailTabs = styled(TabStrip)`
  align-self: flex-end;
  margin-bottom: 1px;
`;

const DetailHead = styled(PaneHead)`
  border-bottom: 1px solid #fff;
`;

const DetailBody = styled.div`
  display: flex;
  flex: 1;
  min-height: 0;
  border-top: 2px solid #b8b8bc;
  padding: 1px 5px 0 5px;
`;

export default function App() {
  return (
    <Shell>
      <Global />
      <MenuBar>
        <Ico name="hands" size={22} />
        {menus.map(([icon, label]) => (
          <MenuButton key={label}>
            <Ico name={icon} />
            {label}
          </MenuButton>
        ))}
        <WindowButtons>
          <WindowButton aria-label="最小化">
            <svg width="12" height="12" viewBox="0 0 12 12" aria-hidden="true">
              <path d="M2 9h8" stroke="#7890a4" strokeWidth="2" />
            </svg>
          </WindowButton>
          <WindowButton aria-label="还原">
            <svg width="12" height="12" viewBox="0 0 12 12" aria-hidden="true">
              <path d="M4 4V2h7v5H9M4 1.5h7M1 5h7v5H1zM1 6h7" fill="none" stroke="#7890a4" strokeWidth="1.4" />
            </svg>
          </WindowButton>
          <WindowButton aria-label="关闭">
            <svg width="12" height="12" viewBox="0 0 12 12" aria-hidden="true">
              <path d="M2 2l8 8M10 2l-8 8" stroke="#607890" strokeWidth="2.6" />
            </svg>
          </WindowButton>
        </WindowButtons>
      </MenuBar>

      <ToolRow>
        <ToolBar role="toolbar">
          {tools.map((group, g) => (
            <React.Fragment key={g}>
              {g > 0 && <ToolSeparator />}
              {group.map((name) => (
                <ToolButton key={name} aria-label={name}>
                  {toolFace(name)}
                </ToolButton>
              ))}
            </React.Fragment>
          ))}
        </ToolBar>
        <ForumButton>
          <Ico name="book" />
          到神机论坛找问题答案
        </ForumButton>
      </ToolRow>

      <TabStrip $inset={3} role="tablist">
        {tabs.map(([label, icon], i) => (
          <Tab key={label} role="tab" $on={i === 4} aria-selected={i === 4}>
            {icon && <Ico name={icon} />}
            {label}
          </Tab>
        ))}
      </TabStrip>

      <Workspace>
        <LeftColumn $width={497}>
          <Pane $height={452}>
            <PaneHead $height={29}>
              <Close label="关闭定额子目" />
              <HeadText>{'定额子目(拖拉)(双击) => ../安徽2006清单软件/数据库/安装清单库'}</HeadText>
            </PaneHead>
            <Box $white>
              <Clip $pad={3}>
                <Tree nodes={chapters} />
              </Clip>
            </Box>
          </Pane>
          <HSplit />
          <Pane>
            <PaneHead>
              <Close label="关闭定额库列表" />
              <HeadText>定额库列表(拖拉)(双击)</HeadText>
            </PaneHead>
            <Box>
              <BoxBody>
                <Clip $pad={3}>
                  <Tree nodes={libraries} />
                </Clip>
                <VScroll before={70} size={239} />
              </BoxBody>
              <HScroll size={216} end={21} />
            </Box>
          </Pane>
        </LeftColumn>
        <VSplit />
        <Column>
          <Row $height={452}>
            <Pane>
              <PaneHead $pad={2}>
                <FlatButton>
                  <Swap>换</Swap>
                </FlatButton>
                <FlatButton>
                  <Ico name="hammer" />
                  <Big>取费</Big>
                </FlatButton>
                <FlatButton>
                  <Ico name="pc" />
                  <Big $bold>计算</Big>
                </FlatButton>
                <Select label="范围" value="全部" width={101} gap={8} />
                <Spring />
                <Select label="名称方式" value="保号名" width={75} gap={4} />
                <Select label="分解方式" value="不分解" width={80} gap={10} />
                <Spring $end={70} />
                <Field aria-label="起始" />
                <Field aria-label="结束" />
                <Spring $end={235} />
              </PaneHead>
              <Box>
                <BoxBody>
                  <Clip>
                    <ItemGrid />
                  </Clip>
                  <VScroll before={26} size={21} />
                </BoxBody>
                <HScroll size={21} end={21} />
              </Box>
              <Marks />
            </Pane>
            <VSplit />
            <Column $width={236}>
              <Pane $height={162}>
                <PaneHead>
                  <Close label="关闭增减" />
                  <FlatButton $gap={12} aria-label="计算">
                    <Ico name="pc" />
                  </FlatButton>
                  <FlatButton aria-label="造价">
                    <Ico name="abc" />
                  </FlatButton>
                  <HeadText $gap={12}>{'646 ->  \\  \\  \\'}</HeadText>
                </PaneHead>
                <Box>
                  <BoxBody>
                    <Clip>
                      <AdjustGrid />
                    </Clip>
                    <VScroll before={5} size={21} />
                  </BoxBody>
                  <HScroll size={21} end={21} />
                </Box>
              </Pane>
              <HSplit />
              <Pane>
                <PaneHead $height={32} $pad={0}>
                  <NavButtons />
                  <HeadText>{' 1 ->  \\  \\  \\'}</HeadText>
                </PaneHead>
                <Box>
                  <BoxBody>
                    <Clip>
                      <KindGrid />
                    </Clip>
                    <VScroll before={5} size={21} />
                  </BoxBody>
                  <HScroll size={21} end={21} />
                </Box>
              </Pane>
            </Column>
          </Row>
          <HSplit />
          <Pane>
            <DetailHead $height={31} $pad={0}>
              <DetailTabs role="tablist">
                {detailTabs.map((label, i) => (
                  <Tab key={label} role="tab" $on={i === 0} aria-selected={i === 0}>
                    {label}
                  </Tab>
                ))}
              </DetailTabs>
              <Spring $end={38} />
              <Close label="关闭定额含量" />
              <Spring $end={14} />
              <NavButtons />
              <FlatButton $gap={14} aria-label="主机">
                <Ico name="pcTower" />
              </FlatButton>
              <FlatButton $gap={14} $off disabled aria-label="设置">
                <Ico name="gear" />
              </FlatButton>
              <FlatButton $gap={14} aria-label="状态">
                <Ico name="lamp" />
              </FlatButton>
              <FlatButton $gap={14} $off disabled aria-label="确认">
                <Ico name="checks" />
              </FlatButton>
              <HeadText $gap={12}>{'646 ->  \\  \\  \\'}</HeadText>
            </DetailHead>
            <DetailBody>
              <Column $width={250}>
                <PaneHead $height={25} $pad={8}>
                  <HeadText>{'项目换算(拖拉) => 当前价格库'}</HeadText>
                </PaneHead>
                <Box>
                  <BoxBody>
                    <Clip $pad={2}>
                      <Tree nodes={prices} />
                    </Clip>
                  </BoxBody>
                  <HScroll size={197} />
                </Box>
              </Column>
              <VSplit />
              <Box>
                <BoxBody>
                  <Clip>
                    <ContentGrid />
                  </Clip>
                  <VScroll before={5} size={21} />
                </BoxBody>
              </Box>
            </DetailBody>
          </Pane>
        </Column>
      </Workspace>
    </Shell>
  );
}
